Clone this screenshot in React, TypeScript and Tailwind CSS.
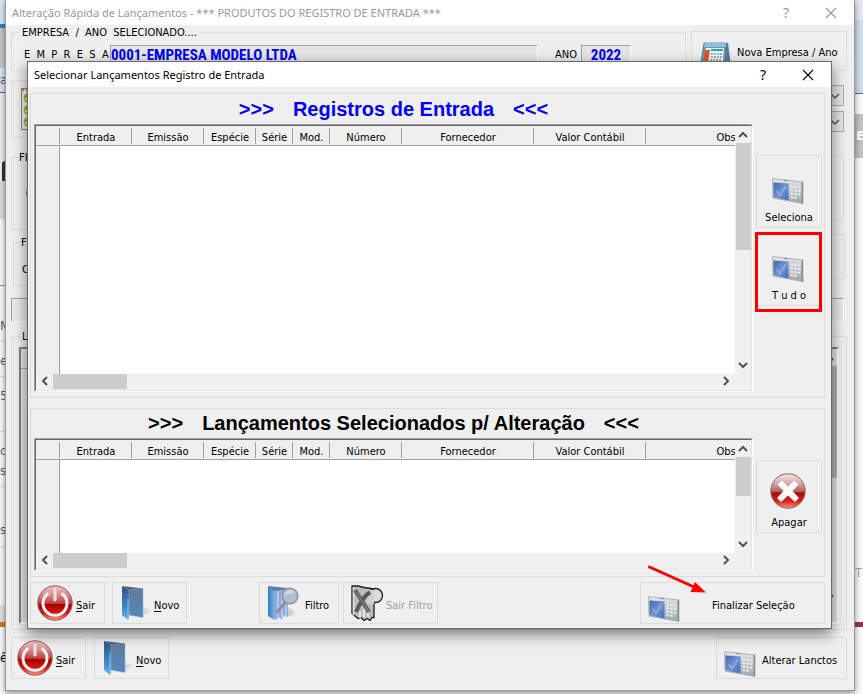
import { useId, type ReactNode } from "react";

const tahoma = "font-['DejaVu_Sans_Condensed','Noto_Sans',sans-serif]";
const segoe = "font-['Noto_Sans','Open_Sans',sans-serif]";

function PowerIcon() {
  const id = useId();
  return (
    <svg width="36" height="36" viewBox="0 0 36 36" className="shrink-0" aria-hidden="true">
      <defs>
        <linearGradient id={id} x1="0" y1="0" x2="0" y2="1">
          <stop offset="0" stopColor="#f3c4c4" />
          <stop offset="0.3" stopColor="#d98080" />
          <stop offset="0.52" stopColor="#b83c3c" />
          <stop offset="0.54" stopColor="#a80000" />
          <stop offset="0.8" stopColor="#d81a12" />
          <stop offset="1" stopColor="#ff9a8c" />
        </linearGradient>
      </defs>
      <circle cx="18" cy="18" r="17.2" fill={`url(#${id})`} stroke="#8e5a5a" strokeWidth="1" />
      <path d="M11.500 8.200A12 12 0 1 0 24.500 8.200" fill="none" stroke="#f2f2f2" strokeWidth="3" />
      <path d="M18 4.500V15" stroke="#e6e2e2" strokeWidth="3.200" strokeLinecap="round" />
    </svg>
  );
}

function DeleteIcon() {
  const id = useId();
  return (
    <svg width="36" height="36" viewBox="0 0 36 36" className="shrink-0" aria-hidden="true">
      <defs>
        <linearGradient id={id} x1="0" y1="0" x2="0" y2="1">
          <stop offset="0" stopColor="#f6eaea" />
          <stop offset="0.3" stopColor="#d3a3a3" />
          <stop offset="0.52" stopColor="#b45a5a" />
          <stop offset="0.55" stopColor="#a80808" />
          <stop offset="0.8" stopColor="#d8241c" />
          <stop offset="1" stopColor="#ff9078" />
        </linearGradient>
      </defs>
      <circle cx="18" cy="18" r="17.2" fill={`url(#${id})`} stroke="#8a6464" strokeWidth="1" />
      <path d="M7.500 11.500 12 7.500l6 6L24 7.500l4.500 4L22.500 18l6.500 7L25 29 18 22.500 11 29 7 25l6.500-7z" fill="#fafafa" />
    </svg>
  );
}

function FolderIcon() {
  const id = useId();
  return (
    <svg width="30" height="36" viewBox="0 0 30 36" className="shrink-0" aria-hidden="true">
      <defs>
        <linearGradient id={`${id}a`} x1="0" y1="0" x2="0" y2="1">
          <stop offset="0" stopColor="#33557e" />
          <stop offset="0.6" stopColor="#3b84c4" />
          <stop offset="1" stopColor="#68b4e4" />
        </linearGradient>
        <linearGradient id={`${id}b`} x1="0" y1="0" x2="0" y2="1">
          <stop offset="0" stopColor="#66799a" />
          <stop offset="1" stopColor="#5489bd" />
        </linearGradient>
      </defs>
      <path d="M21 32 29 26 21 21z" fill="#dadada" />
      <path d="M1 1 8 5v27l-1 3-6-5z" fill={`url(#${id}a)`} />
      <path d="M1 1 22 3.500V6L8 5z" fill="#4a6489" />
      <path d="M8 5 22 3.500v29L8 30z" fill={`url(#${id}b)`} stroke="#86b1d6" strokeWidth="0.500" />
      <path d="M7 13v22" stroke="#8cc7ef" strokeWidth="0.900" />
    </svg>
  );
}

function FilterIcon() {
  const id = useId();
  return (
    <svg width="32" height="36" viewBox="0 0 32 36" className="shrink-0" aria-hidden="true">
      <defs>
        <linearGradient id={id} x1="0" y1="0" x2="1" y2="0">
          <stop offset="0" stopColor="#2f7fc2" />
          <stop offset="1" stopColor="#7badda" />
        </linearGradient>
      </defs>
      <path d="M20 32 28 29 22 22z" fill="#cfcfcf" />
      <path d="M1 1 7 5v30l-6-4z" fill={`url(#${id})`} />
      <path d="M1 1 20 3v3L7 6z" fill="#5a7da9" />
      <path d="M7 6 21 4v28l-4-2-2 5-3-3-3 3-2-2z" fill="#8fa9df" />
      <path d="M11 6v26M15 8v26M19 10v22" stroke="#bdcdf2" strokeWidth="1.500" />
      <path d="M18 18 10 27" stroke="#8d8d95" strokeWidth="2.800" strokeLinecap="round" />
      <circle cx="23" cy="11" r="7.800" fill="#b4bdd0" stroke="#8e929c" strokeWidth="1.500" />
      <path d="M17 10a6 6 0 0 1 11-2z" fill="#d0d7e4" />
    </svg>
  );
}

function ClearFilterIcon() {
  return (
    <svg width="32" height="36" viewBox="0 0 32 36" className="shrink-0" aria-hidden="true">
      <path d="M1 1h6l6 1.500 7 1 3 1v28h-2l-2 3-3-2-3 2-3-3-3 1-6-5z" fill="#bcbcbc" stroke="#1c1c1c" strokeWidth="1.300" />
      <circle cx="24.500" cy="10.500" r="7" fill="#dcdcdc" stroke="#1c1c1c" strokeWidth="1.300" />
      <path d="M16 5h7v14h-7z" fill="#d0d0d0" />
      <path d="M2.500 2v28" stroke="#e2e2e2" strokeWidth="1.500" />
      <path d="M9 26v7M13 24v8M17 24v8" stroke="#efefef" strokeWidth="1.500" />
      <path d="M4 5 18 27M19 7C12 12 8 20 5 27" fill="none" stroke="#5a5a5a" strokeWidth="4" />
      <path d="M4 5 18 27" stroke="#858585" strokeWidth="1.300" />
    </svg>
  );
}

function PanelIcon() {
  const id = useId();
  return (
    <svg width="32" height="26" viewBox="0 0 32 26" className="shrink-0" aria-hidden="true">
      <defs>
        <linearGradient id={`${id}a`} x1="0" y1="0" x2="0" y2="1">
          <stop offset="0" stopColor="#e4e6e6" />
          <stop offset="1" stopColor="#a0a6aa" />
        </linearGradient>
        <linearGradient id={`${id}b`} x1="0" y1="0" x2="1" y2="1">
          <stop offset="0" stopColor="#4163aa" />
          <stop offset="0.500" stopColor="#7093d4" />
          <stop offset="1" stopColor="#3f6fc0" />
        </linearGradient>
      </defs>
      <path d="M0.500 0.500 31 4v21.500L1 20z" fill={`url(#${id}a)`} stroke="#a3a8ab" strokeWidth="0.800" />
      <path d="M29.500 4h1.500v21.500h-1.500z" fill="#858d95" />
      <path d="M1.500 4.500 16.500 5.500v17L1.500 19z" fill={`url(#${id}b)`} />
      <path d="M4.500 13l3.500 4.500L14 8" fill="none" stroke="#9ab2dc" strokeWidth="1.600" strokeOpacity="0.800" />
      <path d="M18.500 8.500l2.500.3M22.200 8.900l2.500.3M26 9.300l2.300.3M18.500 12l2.500.3M22.200 12.400l2.500.3M26 12.800l2.300.3M18.500 15.500l2.500.4M22.200 16l2.500.4M26 16.500l2.300.4M18.500 19l2.500.5M22.200 19.600l2.500.4" stroke="#e8edf2" strokeWidth="2" />
      <path d="M25.500 21.500l3 .6" stroke="#8fbf80" strokeWidth="1.400" />
      <path d="M12 2.600h4" stroke="#83898e" strokeWidth="1" />
    </svg>
  );
}

function CalendarIcon() {
  return (
    <svg width="32" height="34" viewBox="0 0 32 34" className="shrink-0" aria-hidden="true">
      <path d="M25 1h3l4 30-6 2z" fill="#567f9c" />
      <path d="M4 1h22l-1 32H-1z" fill="#6d9ab5" stroke="#41708c" strokeWidth="0.800" />
      <path d="M6 6h18l-2 25H2z" fill="#f3f8fa" />
      <path d="M5 8h5L7 28H2z" fill="#e2552c" />
      <path d="M11 8h12" stroke="#25a3c4" strokeWidth="2" />
      <path d="M11 12h12M11 15h11M10 18h12" stroke="#7c98a8" strokeWidth="1.400" strokeDasharray="2 1" />
      <path d="M5 1h21v4H4z" fill="#8fc4d8" />
    </svg>
  );
}

function ChecklistIcon() {
  return (
    <svg width="30" height="42" viewBox="0 0 30 42" className="shrink-0" aria-hidden="true">
      <rect x="0.500" y="0.500" width="29" height="41" fill="#f2f2ea" stroke="#85857f" />
      <path d="M1 2h28" stroke="#c87a70" strokeWidth="2" strokeDasharray="2 2" />
      {[10, 22, 34].map((y) => (
        <g key={y}>
          <circle cx="7" cy={y} r="4.500" fill="#86b82c" />
          <path d={`M4 ${y}l3 3 5-7`} fill="none" stroke="#e4f3c8" strokeWidth="1.500" />
        </g>
      ))}
    </svg>
  );
}

function Chevron({ dir, className = "", weight = 2 }: { dir: "up" | "down" | "left" | "right"; className?: string; weight?: number }) {
  const paths = {
    up: "M1 7 5 3 9 7",
    down: "M1 3 5 7 9 3",
    left: "M7 1 3 5 7 9",
    right: "M3 1 7 5 3 9",
  };
  return (
    <svg width="10" height="10" viewBox="0 0 10 10" className={className} aria-hidden="true">
      <path d={paths[dir]} fill="none" stroke="#505050" strokeWidth={weight} />
    </svg>
  );
}

function TitleBar({ title, inactive = false }: { title: string; inactive?: boolean }) {
  return (
    <header className={`flex h-[25px] items-center bg-white pr-[17px] pl-[6px] text-[11px] ${segoe} ${inactive ? "text-[#999999]" : "text-black"}`}>
      <h1 className="flex-1 whitespace-nowrap">{title}</h1>
      <button type="button" aria-label="Ajuda" className="mr-[33px] w-3 text-sm leading-none">?</button>
      <button type="button" aria-label="Fechar" className="flex w-3 justify-center">
        <svg width="12" height="12" viewBox="0 0 12 12" aria-hidden="true" className="shrink-0">
          <path d="M1 1 11 11M11 1 1 11" stroke="currentColor" strokeWidth="1.100" />
        </svg>
      </button>
    </header>
  );
}

function ToolButton({ icon, children, className = "" }: { icon: ReactNode; children: ReactNode; className?: string }) {
  return (
    <button type="button" className={`flex h-[42px] items-center border border-[#dcdcdc] whitespace-nowrap ${className}`}>
      {icon}
      <span className="pt-[5px]">{children}</span>
    </button>
  );
}

function SideButton({ icon, label }: { icon: ReactNode; label: string }) {
  return (
    <button type="button" className="flex h-[73px] w-full flex-col items-center justify-end border border-[#dcdcdc] pb-[2px]">
      <span className="mr-[3px]">{icon}</span>
      <span className="mt-[7px] whitespace-pre">{label}</span>
    </button>
  );
}

const columns = [
  { label: "", width: "w-6" },
  { label: "Entrada", width: "w-[72px]" },
  { label: "Emissão", width: "w-[72px]" },
  { label: "Espécie", width: "w-[52px]" },
  { label: "Série", width: "w-[37px]" },
  { label: "Mod.", width: "w-[37px]" },
  { label: "Número", width: "w-[72px]" },
  { label: "Fornecedor", width: "w-[132px]" },
  { label: "Valor Contábil", width: "w-28" },
  { label: "Obs", width: "w-40" },
];

function DataGrid({ name, bodyHeight, thumbHeight }: { name: string; bodyHeight: string; thumbHeight: string }) {
  return (
    <div className="border border-t-[#a0a0a0] border-r-white border-b-white border-l-[#a0a0a0]">
      <div className="border border-t-[#696969] border-r-[#e3e3e3] border-b-[#e3e3e3] border-l-[#696969]">
        <div className="flex">
          <div className="min-w-0 flex-1 overflow-hidden bg-white">
            <table aria-label={name} className="w-[770px] table-fixed border-separate border-spacing-0">
              <thead>
                <tr className="h-5 bg-[#efefef]">
                  {columns.map((c) => (
                    <th key={c.label} scope="col" className={`border-b border-[#a0a0a0] p-0 font-normal ${c.width}`}>
                      <span className="block h-4 border-r border-[#a0a0a0] pl-px leading-5">{c.label}</span>
                    </th>
                  ))}
                </tr>
              </thead>
              <tbody>
                <tr className={bodyHeight}>
                  <td className="border-r border-[#a0a0a0] bg-[#efefef]" />
                  <td colSpan={9} />
                </tr>
              </tbody>
            </table>
          </div>
          <div className="flex w-4 flex-col items-center bg-[#f0f0f0]">
            <Chevron dir="up" className="mt-1 mb-[3px] shrink-0" />
            <div className={`w-[15px] bg-[#cdcdcd] ${thumbHeight}`} />
            <Chevron dir="down" className="mt-auto mb-1 shrink-0" />
          </div>
        </div>
        <div className="flex h-4 items-start bg-[#f0f0f0] pr-5 pl-1">
          <Chevron dir="left" className="mt-[2px]" />
          <div className="ml-[3px] h-[15px] w-[74px] bg-[#cdcdcd]" />
          <Chevron dir="right" className="mt-[2px] ml-auto" />
        </div>
      </div>
    </div>
  );
}

function GridHeading({ children, className }: { children: string; className: string }) {
  return (
    <h2 className={`flex items-center justify-center gap-[19px] font-['Liberation_Sans',Arial,sans-serif] text-xl font-bold whitespace-nowrap ${className}`}>
      <span>{">>>"}</span>
      <span>{children}</span>
      <span>{"<<<"}</span>
    </h2>
  );
}

function Mnemonic({ text }: { text: string }) {
  return (
    <>
      <span className="underline underline-offset-2">{text[0]}</span>
      {text.slice(1)}
    </>
  );
}

function SelectionDialog() {
  return (
    <section className="absolute top-[61px] right-[31px] left-[27px] border border-[#6b6b6b] bg-[#efefef] shadow-[0_5px_14px_rgba(0,0,0,0.5)]">
      <TitleBar title="Selecionar Lançamentos Registro de Entrada" />
      <div className="mt-[6px] mr-[6px] mb-1 ml-[2px]">
        <div className="flex gap-[3px] border border-[#dcdcdc] pr-[2px] pb-[5px] pl-[3px]">
          <div className="min-w-0 flex-1">
            <GridHeading className="h-[30px] text-[#0000ff]">Registros de Entrada</GridHeading>
            <DataGrid name="Registros de Entrada" bodyHeight="h-[228px]" thumbHeight="h-[107px]" />
          </div>
          <div className="flex w-[66px] flex-col gap-[5px] pt-[61px]">
            <SideButton icon={<PanelIcon />} label="Seleciona" />
            <div className="relative">
              <SideButton icon={<PanelIcon />} label="T u d o" />
              <div className="pointer-events-none absolute -top-px right-0 -bottom-[6px] -left-px border-3 border-[#ff0000]" />
            </div>
          </div>
        </div>
        <div className="mt-[10px] flex gap-[3px] border border-[#dcdcdc] pr-[2px] pb-[5px] pl-[3px]">
          <div className="min-w-0 flex-1">
            <GridHeading className="h-[29px] pb-[2px] text-black">Lançamentos Selecionados p/ Alteração</GridHeading>
            <DataGrid name="Lançamentos Selecionados" bodyHeight="h-[93px]" thumbHeight="h-[39px]" />
          </div>
          <div className="w-[66px] pt-[51px]">
            <SideButton icon={<DeleteIcon />} label="Apagar" />
          </div>
        </div>
        <div className="mt-[5px] flex">
          <ToolButton icon={<PowerIcon />} className="w-[75px] gap-[3px] pl-[6px]"><Mnemonic text="Sair" /></ToolButton>
          <ToolButton icon={<FolderIcon />} className="ml-[7px] w-[75px] gap-[3px] pl-[8px]"><Mnemonic text="Novo" /></ToolButton>
          <ToolButton icon={<FilterIcon />} className="ml-[72px] w-[80px] gap-[6px] pl-[7px]">Filtro</ToolButton>
          <ToolButton icon={<ClearFilterIcon />} className="ml-1 w-[95px] gap-[3px] pl-[7px] text-[#a0a0a0]">Sair Filtro</ToolButton>
          <div className="relative ml-auto">
            <ToolButton icon={<span className="mt-3"><PanelIcon /></span>} className="w-[185px] gap-8 pl-[7px]">Finalizar Seleção</ToolButton>
            <svg width="60" height="32" viewBox="0 0 60 32" className="pointer-events-none absolute -top-[18px] left-[7px]" aria-hidden="true">
              <path d="M2.500 3 46 22.500" stroke="#ff0000" strokeWidth="3" strokeLinecap="round" />
              <path d="M59 28.500 43.500 28 48 18z" fill="#ff0000" />
            </svg>
          </div>
        </div>
      </div>
    </section>
  );
}

function Combo({ label }: { label: string }) {
  return (
    <div className="relative">
      <select aria-label={label} className="block h-[21px] w-full appearance-none border border-[#adadad] bg-[#e5e5e5]" />
      <Chevron dir="down" weight={1.3} className="pointer-events-none absolute top-[6px] right-1" />
    </div>
  );
}

const sunken = "border border-t-[#a0a0a0] border-r-white border-b-white border-l-[#a0a0a0]";
const narrow = "font-['Roboto_Condensed','Arial_Narrow','Roboto',sans-serif]";

function MainWindow() {
  return (
    <main className="absolute top-0 right-2 left-[5px] border-x border-b border-[#9a9a9a] bg-[#efefef] shadow-[0_2px_6px_rgba(0,0,0,0.45)]">
      <TitleBar title="Alteração Rápida de Lançamentos - *** PRODUTOS DO REGISTRO DE ENTRADA ***" inactive />
      <div className="pt-px pr-[7px] pb-[11px] pl-[5px]">
        <div className="flex gap-[5px]">
          <fieldset className="h-[45px] min-w-0 flex-1 border border-[#dcdcdc] pl-3">
            <legend className="-ml-[5px] px-[3px] pt-px leading-3 whitespace-pre">EMPRESA  /  ANO  SELECIONADO....</legend>
            <div className="mt-[6px] flex pr-[54px]">
              <label htmlFor="empresa" className="w-[86px] pt-[3px] whitespace-pre">E  M  P  R  E  S  A</label>
              <input id="empresa" readOnly defaultValue="0001-EMPRESA MODELO LTDA" className={`h-[23px] min-w-0 flex-1 bg-[#e6e6e6] pb-[3px] text-[15px] font-bold text-[#0000ff] ${sunken} ${narrow}`} />
              <label htmlFor="ano" className="ml-[17px] w-[26px] pt-[3px]">ANO</label>
              <input id="ano" readOnly defaultValue="2022" className={`h-[23px] w-[50px] bg-[#e6e6e6] pb-[3px] text-center text-[15px] font-bold text-[#0000ff] ${sunken} ${narrow}`} />
            </div>
          </fieldset>
          <button type="button" className="mt-[5px] flex h-10 w-[156px] items-center gap-[5px] border border-[#dcdcdc] pl-[8px] whitespace-nowrap">
            <span className="mt-4"><CalendarIcon /></span>
            <span className="pt-[3px]">Nova Empresa / Ano</span>
          </button>
        </div>

        <div className="mt-[9px] flex h-[58px] gap-3 pr-[3px]">
          <div className="flex-1 border border-[#dcdcdc] pt-[7px] pl-[9px]"><ChecklistIcon /></div>
          <div className="flex w-[150px] flex-col gap-[5px] pt-[5px]">
            <Combo label="Período inicial" />
            <Combo label="Período final" />
          </div>
        </div>

        <div className="mt-[13px] flex gap-3 pr-[3px]">
          <fieldset className="h-[79px] flex-1 border border-[#dcdcdc] pl-[6px]">
            <legend className="px-px pt-px leading-3">FI</legend>
            <input type="radio" aria-label="Opção" className="mt-[23px] ml-2 block size-3" />
          </fieldset>
          <div className="mt-1 h-[66px] w-[150px] border border-[#dcdcdc]" />
        </div>

        <div className="mt-1 flex gap-3 pr-[2px]">
          <fieldset className="mt-[2px] ml-[2px] h-[50px] flex-1 border border-[#dcdcdc] pl-[6px]">
            <legend className="px-px pt-px leading-3">F</legend>
            <p className="mt-[14px] ml-[2px]">C</p>
          </fieldset>
          <div className="h-[45px] w-[150px] border border-[#dcdcdc]" />
        </div>

        <div className={`mt-3 mr-[3px] h-6 bg-[#e9e9e9] ${sunken}`} />

        <fieldset className="mt-2 h-[300px] border border-[#dcdcdc] px-[7px]">
          <legend className="ml-[2px] px-px pt-px leading-3">L</legend>
          <div className="mt-1 flex h-[277px] justify-end border-2 border-t-[#808080] border-r-white border-b-white border-l-[#808080] bg-[#e6e6e6]">
            <div className="h-5 flex-1 border-b border-[#a0a0a0]" />
            <div className="flex w-4 flex-col items-center bg-[#e6e6e6]">
              <Chevron dir="up" className="mt-1 mb-[3px] shrink-0" />
              <div className="h-28 w-full bg-[#b4b4b4]" />
              <Chevron dir="down" className="mt-auto mb-5 shrink-0" />
            </div>
          </div>
        </fieldset>

        <div className="mt-[7px] flex">
          <ToolButton icon={<PowerIcon />} className="w-[75px] gap-[3px] pl-[5px]"><Mnemonic text="Sair" /></ToolButton>
          <ToolButton icon={<FolderIcon />} className="ml-2 w-[75px] gap-[3px] pl-[8px]"><Mnemonic text="Novo" /></ToolButton>
          <ToolButton icon={<span className="mt-3"><PanelIcon /></span>} className="ml-auto w-[131px] gap-[6px] pl-[7px]">Alterar Lanctos</ToolButton>
        </div>
      </div>
    </main>
  );
}

function Backdrop() {
  return (
    <div className="flex min-h-[694px] justify-between bg-[#fafafa] text-[13px] text-[#5f6368]">
      <div className="flex w-[5px] flex-col overflow-hidden">
        <div className="h-6 bg-[#dfe5f2]" />
        <div className="h-1 bg-[#2b86b8]" />
        <div className="h-10 bg-[#c4c8cc]" />
        <div className="h-[25px] border-b border-[#666666] bg-[#d9e4f4] leading-6">a</div>
        <div className="h-[68px] bg-[#efefef]" />
        <div className="h-5 bg-[#efefef] pl-[2px]"><div className="h-full rounded-tl bg-[#30353a]" /></div>
        <div className="h-[38px] bg-[#dcdcdc]" />
        <div className="h-[67px] border-b border-[#999999]" />
        <div className="flex h-[56px] items-end border-b border-[#dddddd] pb-2">M</div>
        <div className="h-[35px] border-b border-[#dddddd] pt-3">e</div>
        <div className="h-[55px] border-b border-[#dddddd] pt-3">5</div>
        <div className="h-[55px] border-b border-[#dddddd] pt-[9px] leading-5">o<br />se</div>
        <div className="h-[60px] border-b border-[#dddddd] pt-9">s</div>
        <div className="h-[58px]" />
        <div className="h-[17px] bg-[#e0e0e0]" />
        <div className="h-[5px] bg-[#d27a1e]" />
        <div className="pt-6 text-black">ê</div>
      </div>
      <div className="flex w-2 flex-col overflow-hidden">
        <div className="h-5 bg-[#e4e6f2]" />
        <div className="h-[74px] border-b border-[#666666] bg-[#cfdcee]" />
        <div className="mt-5 flex h-11 items-center bg-[#c2c2c2] pl-px font-bold text-white">E</div>
        <div className="mt-[408px] h-5 text-[#a8a8ac]">TS</div>
        <div className="mt-9 h-[5px] bg-[#a5304a]" />
      </div>
    </div>
  );
}

export default function App() {
  return (
    <div className={`relative min-h-screen overflow-hidden text-[11px] leading-[14px] text-black ${tahoma}`}>
      <Backdrop />
      <MainWindow />
      <SelectionDialog />
    </div>
  );
}
